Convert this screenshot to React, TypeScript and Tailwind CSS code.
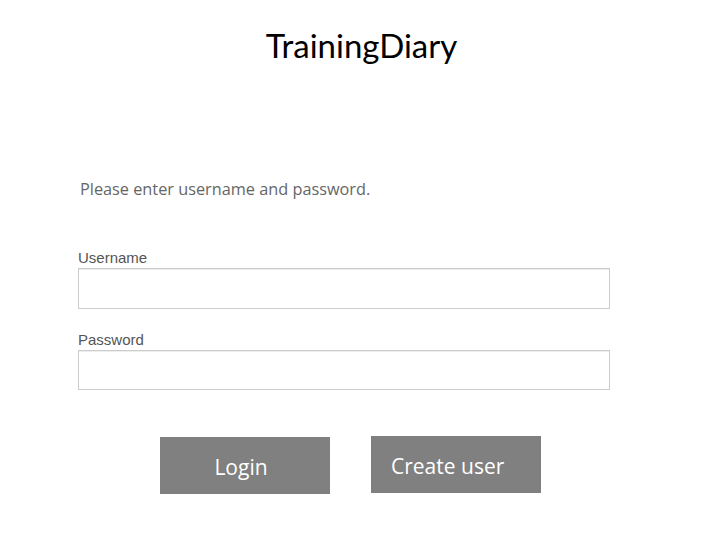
export default function App() {
  return (
    <div className="min-h-[545px] bg-white">
      {/* Header */}
      <div className="flex justify-center pt-[25px] pl-[22px]">
        <h1 className="text-[33px] leading-[40px] text-black font-['Lato',sans-serif]">
          TrainingDiary
        </h1>
      </div>

      <div className="pl-[78px] w-[612px]">
        <p className="mt-[114px] ml-[2px] text-[16.3px] leading-[20px] text-[#666] font-['Open_Sans','Noto_Sans',sans-serif]">
          Please enter username and password.
        </p>

        <form className="mt-[49px] font-['Liberation_Sans',Arial,sans-serif]">
          <label className="block text-[15px] leading-[19px] text-[#555]">
            Username
          </label>
          <input
            type="text"
            className="block mt-px w-[532px] h-[41px] border border-[#ccc] shadow-[inset_0_1px_1px_rgba(0,0,0,0.075)]"
          />

          <label className="block mt-[21px] text-[15px] leading-[19px] text-[#555]">
            Password
          </label>
          <input
            type="password"
            className="block mt-px w-[532px] h-[40px] border border-[#ccc] shadow-[inset_0_1px_1px_rgba(0,0,0,0.075)]"
          />

          <div className="flex items-start mt-[46px] pl-[82px] gap-[41px] font-['Open_Sans','Noto_Sans',sans-serif]">
            <button
              type="button"
              className="mt-px w-[170px] h-[57px] bg-[#808080] text-white text-[21px] pt-[4px] pr-[8px]"
            >
              Login
            </button>
            <button
              type="button"
              className="w-[170px] h-[57px] bg-[#808080] text-white text-[21px] pt-[4px] text-left pl-[20px]"
            >
              Create user
            </button>
          </div>
        </form>
      </div>
    </div>
  );
}
